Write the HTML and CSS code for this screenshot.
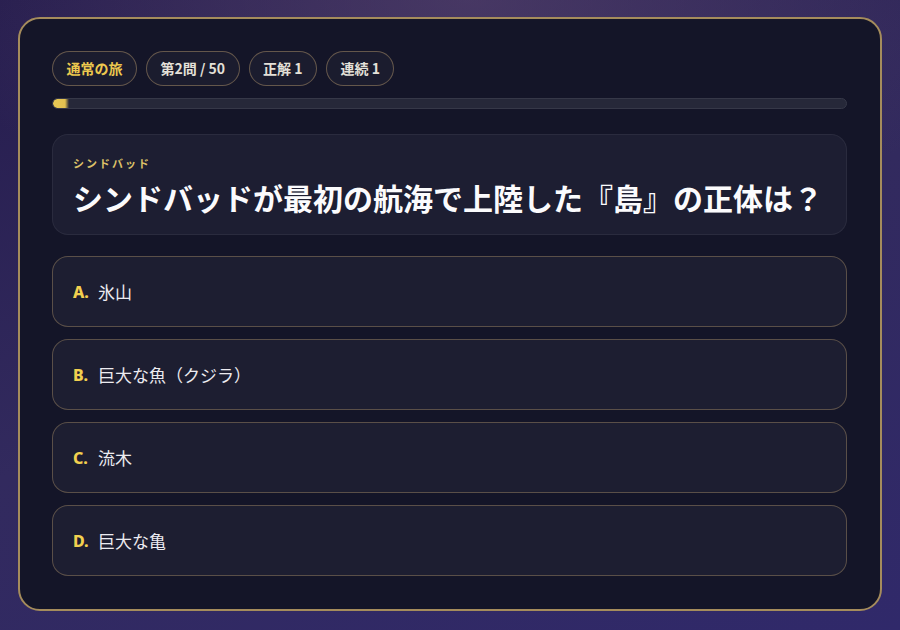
FILE: index.html
```html
<!DOCTYPE html>
<html lang="ja">
<head>
<meta charset="utf-8">
<link rel="stylesheet" href="styles.css">
</head>
<body>
<main class="card">
  <div class="chips">
    <span class="chip chip-mode">通常の旅</span>
    <span class="chip">第2問 / 50</span>
    <span class="chip">正解 1</span>
    <span class="chip">連続 1</span>
  </div>
  <div class="progress"><div class="progress-fill" style="width:2%"></div></div>
  <section class="question">
    <div class="q-label">シンドバッド</div>
    <h1 class="q-title">シンドバッドが最初の航海で上陸した『島』の正体は？</h1>
  </section>
  <div class="options">
    <button class="option"><span class="opt-letter">A.</span><span class="opt-text">氷山</span></button>
    <button class="option"><span class="opt-letter">B.</span><span class="opt-text">巨大な魚（クジラ）</span></button>
    <button class="option"><span class="opt-letter">C.</span><span class="opt-text">流木</span></button>
    <button class="option"><span class="opt-letter">D.</span><span class="opt-text">巨大な亀</span></button>
  </div>
</main>
</body>
</html>
```
FILE: styles.css
```css
* { box-sizing: border-box; }
html, body { height: 100%; }
body {
  margin: 0;
  padding: 17px 18px 19px;
  font-family: "Noto Sans CJK JP", "Noto Sans", sans-serif;
  background:
    radial-gradient(ellipse 60% 40% at 52% 0%, rgba(90, 70, 110, 0.6), rgba(90, 70, 110, 0) 100%),
    linear-gradient(160deg, #261d4e 0%, #322a5e 50%, #30296a 100%);
  color: #fff;
}
.card {
  height: 594px;
  border: 2px solid #a58c5c;
  border-radius: 22px;
  background: #141528;
  padding: 32px 33px 32px 32px;
  display: flex;
  flex-direction: column;
}
.chips {
  display: flex;
  gap: 9px;
}
.chip {
  display: inline-block;
  padding: 6px 13.5px;
  line-height: 21px;
  font-size: 14px;
  font-weight: 700;
  color: #e4e0d8;
  border: 1px solid rgba(190, 160, 110, 0.45);
  border-radius: 999px;
  background: rgba(255, 255, 255, 0.03);
}
.chip-mode { color: #ecc84e; }
.progress {
  margin-top: 12px;
  height: 11px;
  border-radius: 999px;
  background: #262839;
  border: 1px solid #363848;
  overflow: hidden;
}
.progress-fill {
  height: 100%;
  border-radius: 999px 0 0 999px;
  background: linear-gradient(90deg, #e8c855 0%, #e3c150 75%, rgba(227, 193, 80, 0) 100%);
}
.question {
  margin-top: 25px;
  height: 101px;
  background: #1d1e32;
  border: 1px solid rgba(255, 255, 255, 0.06);
  border-radius: 16px;
  padding: 20px 20px 0;
}
.q-label {
  font-size: 11px;
  font-weight: 700;
  letter-spacing: 2px;
  color: #dcc068;
  line-height: 16px;
}
.q-title {
  margin: 6px 0 0;
  font-size: 30px;
  font-weight: 700;
  line-height: 40px;
  color: #fbfbfd;
}
.options {
  margin-top: 21px;
  display: flex;
  flex-direction: column;
  gap: 12px;
}
.option {
  height: 71px;
  display: flex;
  align-items: center;
  padding: 0 20px;
  background: #1d1e31;
  border: 1px solid rgba(190, 160, 110, 0.38);
  border-radius: 16px;
  font-family: inherit;
  text-align: left;
  cursor: pointer;
}
.opt-letter {
  font-family: "Noto Sans", sans-serif;
  font-weight: 800;
  font-size: 16px;
  color: #f2d04f;
  width: 25px;
}
.opt-text {
  font-size: 17px;
  color: #ecebf0;
}
```
